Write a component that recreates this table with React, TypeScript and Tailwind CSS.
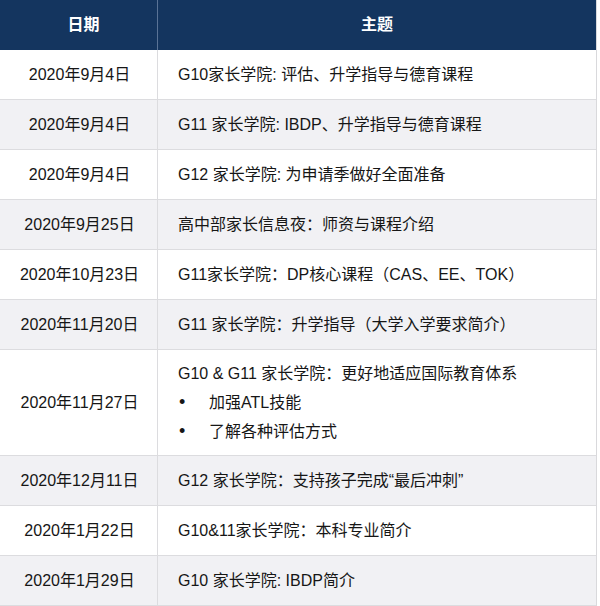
import React from 'react';

type Row = {
  date: string;
  topic: string;
  bullets?: string[];
};

const ROWS: Row[] = [
  { date: '2020年9月4日', topic: 'G10家长学院: 评估、升学指导与德育课程' },
  { date: '2020年9月4日', topic: 'G11 家长学院: IBDP、升学指导与德育课程' },
  { date: '2020年9月4日', topic: 'G12 家长学院: 为申请季做好全面准备' },
  { date: '2020年9月25日', topic: '高中部家长信息夜：师资与课程介绍' },
  { date: '2020年10月23日', topic: 'G11家长学院：DP核心课程（CAS、EE、TOK）' },
  { date: '2020年11月20日', topic: 'G11 家长学院：升学指导（大学入学要求简介）' },
  {
    date: '2020年11月27日',
    topic: 'G10 & G11 家长学院：更好地适应国际教育体系',
    bullets: ['加强ATL技能', '了解各种评估方式'],
  },
  { date: '2020年12月11日', topic: 'G12 家长学院：支持孩子完成“最后冲刺”' },
  { date: '2020年1月22日', topic: 'G10&11家长学院：本科专业简介' },
  { date: '2020年1月29日', topic: 'G10 家长学院: IBDP简介' },
];

const font = { fontFamily: '"Liberation Sans", "Noto Sans CJK SC", sans-serif' };

export default function App() {
  return (
    <div className="w-[600px] bg-white" style={font}>
      <div className="w-[597px] border-r border-[#d9d9dc]">
        {/* Header */}
        <div className="flex h-[50px] bg-[#14355f] text-white text-[16px] font-bold">
          <div className="w-[158px] flex items-center justify-center pl-[10px] border-r border-[#5a7396]">
            日期
          </div>
          <div className="flex-1 flex items-center justify-center">主题</div>
        </div>

        {ROWS.map((row, i) => (
          <div
            key={i}
            className={`flex border-b border-[#dcdcdf] text-[16px] text-[#161616] ${
              row.bullets ? 'h-[106px]' : 'h-[50px]'
            } ${i % 2 === 1 ? 'bg-[#f1f1f4]' : 'bg-white'}`}
          >
            <div className="w-[158px] flex items-center justify-center pl-[2px] border-r border-[#dcdcdf] whitespace-nowrap">
              {row.date}
            </div>
            <div className="flex-1 flex flex-col justify-center pl-[20px] pr-2">
              <div className="leading-[29px] whitespace-nowrap">{row.topic}</div>
              {row.bullets?.map((b) => (
                <div key={b} className="flex items-center leading-[29px]">
                  <span className="w-[31px] pl-[1px] text-[18px]">•</span>
                  <span>{b}</span>
                </div>
              ))}
            </div>
          </div>
        ))}
      </div>
    </div>
  );
}
